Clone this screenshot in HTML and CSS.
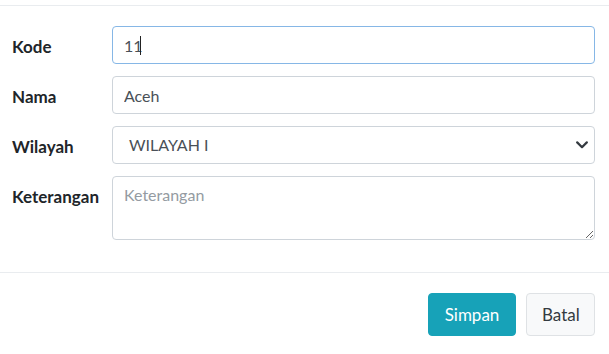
FILE: index.html
```html
<!DOCTYPE html>
<html lang="id">
<head>
<meta charset="utf-8">
<title>Form Provinsi</title>
<link rel="stylesheet" href="styles.css">
</head>
<body>
<div class="modal">
  <div class="modal-header"></div>
  <form class="modal-body">
    <div class="row">
      <label class="label" for="kode">Kode</label>
      <div class="field">
        <input id="kode" class="control focus" type="text" value="11">
        <span class="caret"></span>
      </div>
    </div>
    <div class="row">
      <label class="label" for="nama">Nama</label>
      <div class="field"><input id="nama" class="control" type="text" value="Aceh"></div>
    </div>
    <div class="row">
      <label class="label" for="wilayah">Wilayah</label>
      <div class="field">
        <div class="select control">
          <span class="select-text">WILAYAH I</span>
          <svg class="chev" width="12" height="8" viewBox="0 0 12 8"><path d="M1.2 1.4 L6 6.2 L10.8 1.4" fill="none" stroke="#343a40" stroke-width="2.2" stroke-linecap="round" stroke-linejoin="round"/></svg>
        </div>
      </div>
    </div>
    <div class="row last">
      <label class="label" for="ket">Keterangan</label>
      <div class="field"><textarea id="ket" class="control area" placeholder="Keterangan"></textarea></div>
    </div>
  </form>
  <div class="modal-footer">
    <button class="btn btn-info" type="button">Simpan</button>
    <button class="btn btn-light" type="button">Batal</button>
  </div>
</div>
</body>
</html>
```
FILE: styles.css
```css
* { box-sizing: border-box; }
html, body { margin: 0; padding: 0; background: #fff; }
body {
  font-family: Lato, "Open Sans", "Liberation Sans", sans-serif;
  font-size: 16px;
  line-height: 24px;
  color: #212529;
}
.modal { width: 609px; }
.modal-header {
  height: 6px;
  border-bottom: 1px solid #e9ecef;
}
.modal-body {
  padding: 20px 14px 32px 12px;
  display: flex;
  flex-direction: column;
  gap: 12px;
}
.row {
  display: grid;
  grid-template-columns: 100px 1fr;
}
.label {
  font-weight: 700;
  font-size: 17px;
  padding-top: 9px;
  color: #212529;
}
.field { position: relative; }
.control {
  display: block;
  width: 100%;
  height: 38px;
  border: 1px solid #ced4da;
  border-radius: 4px;
  padding: 6px 11px;
  font-family: inherit;
  font-size: 16px;
  line-height: 24px;
  color: #495057;
  background: #fff;
  outline: none;
}
.control.focus { border-color: #86b7e6; }
.caret {
  position: absolute;
  left: 28px;
  top: 10px;
  width: 1px;
  height: 19px;
  background: #222;
}
.select {
  display: flex;
  align-items: center;
  justify-content: space-between;
  padding: 6px 6px 6px 16px;
}
.select-text { color: #495057; }
.area {
  height: 64px;
  resize: vertical;
}
.area::placeholder { color: #949ba2; }
.modal-footer {
  border-top: 1px solid #e9ecef;
  padding: 20px 14px 17px 0;
  display: flex;
  justify-content: flex-end;
  gap: 10px;
}
.btn {
  height: 43px;
  border-radius: 4px;
  font-family: inherit;
  font-size: 17px;
  line-height: 24px;
  padding: 0 15px;
  border: 1px solid transparent;
}
.btn-info {
  background: #17a2b8;
  border-color: #17a2b8;
  color: #fff;
  width: 88px;
}
.btn-light {
  background: #f8f9fa;
  border-color: #dfe2e5;
  color: #343a40;
  width: 69px;
}
```
